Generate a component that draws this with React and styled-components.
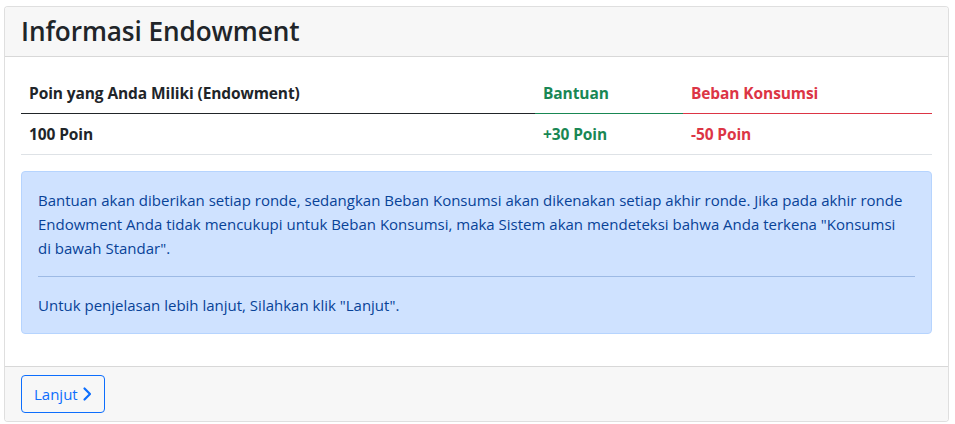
import React from 'react';
import styled, { createGlobalStyle } from 'styled-components';

const GlobalStyle = createGlobalStyle`
  * { box-sizing: border-box; }
  body {
    margin: 0;
    background: #fff;
    font-family: 'Open Sans', 'Noto Sans', 'Liberation Sans', sans-serif;
    font-size: 16px;
    line-height: 1.5;
    color: #212529;
  }
`;

const Page = styled.div`
  padding: 6px 6px 3px 4px;
`;

const Card = styled.div`
  display: flex;
  flex-direction: column;
  border: 1px solid rgba(0, 0, 0, 0.125);
  border-radius: 4px;
  background: #fff;
  overflow: hidden;
`;

const CardHeader = styled.div`
  background: #f7f7f7;
  border-bottom: 1px solid rgba(0, 0, 0, 0.125);
  padding: 8px 16px;
`;

const Title = styled.h3`
  margin: 0;
  font-size: 26.2px;
  font-weight: 600;
  line-height: 33px;
  letter-spacing: -0.1px;
`;

const CardBody = styled.div`
  padding: 16px;
`;

const Table = styled.table`
  width: 100%;
  border-collapse: collapse;
  margin-bottom: 16px;
  table-layout: fixed;
`;

const Cell = styled.td`
  padding: 8px;
  font-weight: 700;
  text-align: left;
  width: ${p => p.$w || 'auto'};
  color: ${p => p.$color || '#212529'};
  border-bottom: 1px solid ${p => (p.$head ? p.$color || '#212529' : '#dee2e6')};
  font-size: 15.5px;
  line-height: 24px;
  letter-spacing: -0.1px;
`;

const Alert = styled.div`
  background: #cfe2ff;
  border: 1px solid #b6d4fe;
  border-radius: 4px;
  color: #084298;
  padding: 16px;
  margin-bottom: 16px;
`;

const Text = styled.p`
  margin: 0;
  max-width: 868px;
  font-size: 15px;
  line-height: 24px;
`;

const Rule = styled.hr`
  margin: 16px 0;
  border: 0;
  border-top: 1px solid #084298;
  opacity: 0.25;
`;

const CardFooter = styled.div`
  background: #f7f7f7;
  border-top: 1px solid rgba(0, 0, 0, 0.125);
  padding: 8px 16px;
`;

const Button = styled.button`
  display: inline-flex;
  align-items: center;
  gap: 3px;
  font-family: inherit;
  font-size: 15px;
  line-height: 24px;
  color: #0d6efd;
  background: transparent;
  border: 1px solid #0d6efd;
  border-radius: 4px;
  padding: 6px 11px 6px 12px;
  cursor: pointer;
`;

const Chevron = () => (
  <svg width="12" height="16" viewBox="0 0 12 16" fill="none">
    <path d="M3.5 2.5 L9 8 L3.5 13.5" stroke="currentColor" strokeWidth="2.2" strokeLinecap="round" strokeLinejoin="round" />
  </svg>
);

export default function App() {
  return (
    <Page>
      <GlobalStyle />
      <Card>
        <CardHeader>
          <Title>Informasi Endowment</Title>
        </CardHeader>
        <CardBody>
          <Table>
            <thead>
              <tr>
                <Cell as="th" $head $w="514px">Poin yang Anda Miliki (Endowment)</Cell>
                <Cell as="th" $head $w="148px" $color="#198754">Bantuan</Cell>
                <Cell as="th" $head $color="#dc3545">Beban Konsumsi</Cell>
              </tr>
            </thead>
            <tbody>
              <tr>
                <Cell>100 Poin</Cell>
                <Cell $color="#198754">+30 Poin</Cell>
                <Cell $color="#dc3545">-50 Poin</Cell>
              </tr>
            </tbody>
          </Table>
          <Alert>
            <Text>
              Bantuan akan diberikan setiap ronde, sedangkan Beban Konsumsi akan dikenakan setiap akhir ronde. Jika pada akhir ronde
              Endowment Anda tidak mencukupi untuk Beban Konsumsi, maka Sistem akan mendeteksi bahwa Anda terkena "Konsumsi
              di bawah Standar".
            </Text>
            <Rule />
            <Text>Untuk penjelasan lebih lanjut, Silahkan klik "Lanjut".</Text>
          </Alert>
        </CardBody>
        <CardFooter>
          <Button>
            Lanjut
            <Chevron />
          </Button>
        </CardFooter>
      </Card>
    </Page>
  );
}
